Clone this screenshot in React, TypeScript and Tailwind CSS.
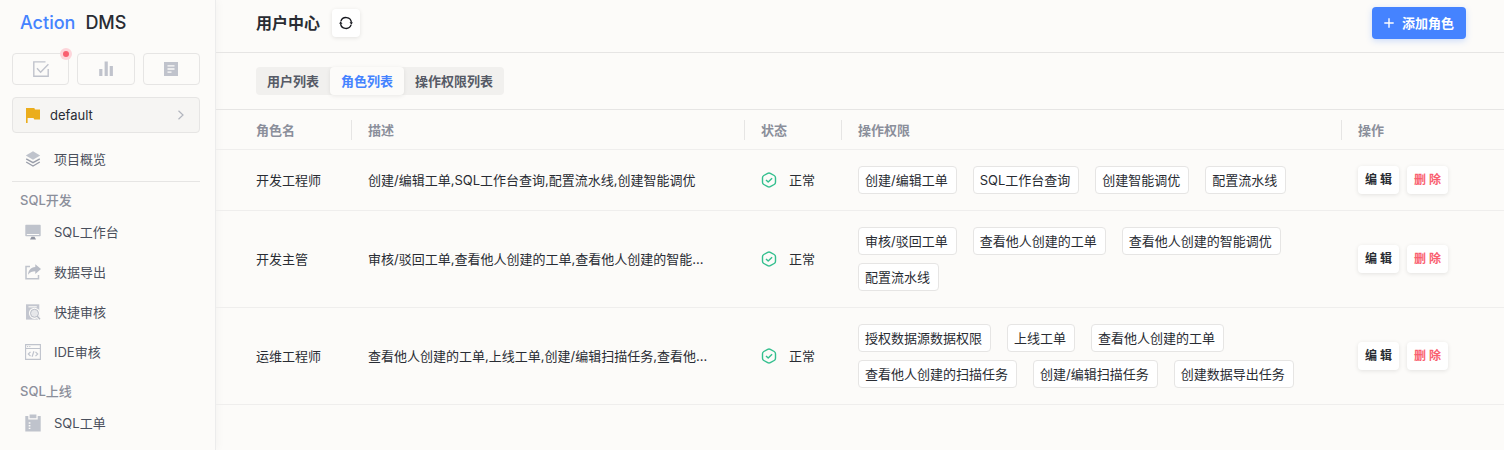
import React from "react";

const iconProps = { width: 16, height: 16, viewBox: "0 0 16 16", "aria-hidden": true } as const;

const LayersIcon = () => (
  <svg {...iconProps} className="text-[#bfc3cc]">
    <path d="M8 0.3 15.2 4.500 8 8.700.8 4.500Z" fill="currentColor" />
    <path d="M1.200 7.800 8 11.700 14.800 7.800" fill="none" stroke="#9a9eaa" strokeWidth="1.400" />
    <path d="M1.200 11 8 15 14.800 11" fill="none" stroke="#9a9eaa" strokeWidth="1.400" />
  </svg>
);

const MonitorIcon = () => (
  <svg {...iconProps} className="text-[#bfc3cc]">
    <path fillRule="evenodd" d="M1 .8h14a.7.7 0 0 1 .7.7v10a.7.7 0 0 1-.7.7H1a.7.7 0 0 1-.7-.7v-10A.7.7 0 0 1 1 .8Zm.8 9.300v.8h12.400v-.8Z" fill="currentColor" />
    <path d="M6.500 12.800h3l1.500 2.700H5Z" fill="#8f93a0" />
  </svg>
);

const ExportIcon = () => (
  <svg {...iconProps} className="text-[#bfc3cc]">
    <path d="M5 2.500H1v12.300h12.500V11" fill="none" stroke="currentColor" strokeWidth="1.500" />
    <path d="M10.300.2 16 5.100l-5.700 4.800V7.200C7 7.200 5 8 3.100 10.800 3.300 6.600 5.600 3.300 10.300 3Z" fill="#b8bcc6" />
  </svg>
);

const SearchDocIcon = () => (
  <svg {...iconProps}>
    <path d="M1 .3h13.300V15.600H1Z" fill="#c3c6cf" />
    <path d="M3.500 2.800h8.300" stroke="#fcfbf9" strokeWidth="1.100" />
    <circle cx="9.500" cy="9.300" r="4.300" fill="none" stroke="#fcfbf9" strokeWidth="2.600" />
    <path d="m12.300 12.300 3 3.400" stroke="#fcfbf9" strokeWidth="3" />
    <circle cx="9.500" cy="9.300" r="4" fill="#e6e7ea" stroke="#b8bcc6" strokeWidth="1" />
    <path d="m12.300 12.200 2.700 3.100" stroke="#b4b8c2" strokeWidth="1.300" />
  </svg>
);

const CodeWindowIcon = () => (
  <svg {...iconProps} fill="none" stroke="#bfc3cc">
    <path d="M.6.6h14.800v14.800H.6ZM.6 4.500h14.800" strokeWidth="1.100" />
    <path d="M2 2.600h1.200M4.200 2.600h1.200" strokeWidth="1" />
    <path d="M5.500 7.800 3.300 10l2.200 2.200M10.500 7.800l2.200 2.200-2.200 2.200M8.900 7.300l-1.800 5.400" strokeWidth="1.200" />
  </svg>
);

const ClipboardIcon = () => (
  <svg width="16" height="18" viewBox="0 0 16 18" aria-hidden="true">
    <path d="M.3 2h3v3.500h9.400V2h3v15.500H.3Z" fill="#bfc3cc" />
    <path d="M4.600.500h6.800v3.700H4.600Z" fill="#bfc3cc" />
    <path d="M3.700 9h1.700M3.700 11.700h1.700M3.700 14.400h1.700" stroke="#fcfbf9" strokeWidth="1.400" />
  </svg>
);

const CheckBoxIcon = () => (
  <svg {...iconProps} fill="none" stroke="#c0c3cc" strokeWidth="1.400">
    <path d="M12.500.9H.8v14.400h14.400V8" />
    <path d="m4 7.300 3.600 3.900 7.800-8" />
  </svg>
);

const ChartIcon = () => (
  <svg {...iconProps} fill="#c0c3cc">
    <path d="M1.200 8h3.200v7H1.200ZM6.600.500h3.200V15H6.600ZM11.700 5h3.200v10h-3.200Z" />
  </svg>
);

const NoteIcon = () => (
  <svg {...iconProps}>
    <path d="M1 1h14v14H1Z" fill="#c0c3cc" />
    <path d="M4.500 4.800h7M4.500 8h7M4.500 11.200h4" stroke="#fcfbf9" strokeWidth="1.300" />
  </svg>
);

const FlagIcon = () => (
  <svg {...iconProps}>
    <path d="M1 1h8.300l.7 1.500h5v10H9.300L8.500 11H2.600v5H1Z" fill="#ebad1c" />
  </svg>
);

const ChevronIcon = () => (
  <svg width="8" height="12" viewBox="0 0 8 12" fill="none" stroke="#b2b5be" strokeWidth="1.200" aria-hidden="true">
    <path d="m1.500 1.800 4.500 4.200-4.500 4.200" />
  </svg>
);

const RefreshIcon = () => (
  <svg width="14" height="14" viewBox="0 0 14 14" fill="none" stroke="#17191f" strokeWidth="1.300" aria-hidden="true">
    <path d="M1.900 5.200A5.400 5.400 0 0 1 12.400 6.600M12.100 8.800A5.400 5.400 0 0 1 1.600 7.400" />
    <path d="M10.500 6.300h3.300L12.500 8.700ZM.2 7.700h3.300L1.500 5.300Z" fill="#17191f" stroke="none" />
  </svg>
);

const PlusIcon = () => (
  <svg width="10" height="10" viewBox="0 0 10 10" stroke="#fff" strokeWidth="1.400" aria-hidden="true">
    <path d="M5 .3v9.400M.3 5h9.400" />
  </svg>
);

const StatusIcon = () => (
  <svg {...iconProps} fill="none" stroke="#33bf8e" strokeWidth="1.400" strokeLinejoin="round">
    <path d="M6.700 1.300a2.600 2.600 0 0 1 2.600 0l3.900 2.200a2.600 2.600 0 0 1 1.300 2.300v4.400a2.600 2.600 0 0 1-1.300 2.300l-3.900 2.200a2.600 2.600 0 0 1-2.600 0l-3.900-2.200a2.600 2.600 0 0 1-1.300-2.300V5.800a2.600 2.600 0 0 1 1.300-2.300Z" />
    <path d="m5 8 2.200 2.100 3.900-3.900" />
  </svg>
);

const sections = [
  {
    title: "SQL开发",
    items: [
      { label: "SQL工作台", icon: <MonitorIcon /> },
      { label: "数据导出", icon: <ExportIcon /> },
      { label: "快捷审核", icon: <SearchDocIcon /> },
      { label: "IDE审核", icon: <CodeWindowIcon /> },
    ],
  },
  { title: "SQL上线", items: [{ label: "SQL工单", icon: <ClipboardIcon /> }] },
];

const roles = [
  {
    name: "开发工程师",
    description: "创建/编辑工单,SQL工作台查询,配置流水线,创建智能调优",
    permissions: ["创建/编辑工单", "SQL工作台查询", "创建智能调优", "配置流水线"],
  },
  {
    name: "开发主管",
    description: "审核/驳回工单,查看他人创建的工单,查看他人创建的智能...",
    permissions: ["审核/驳回工单", "查看他人创建的工单", "查看他人创建的智能调优", "配置流水线"],
  },
  {
    name: "运维工程师",
    description: "查看他人创建的工单,上线工单,创建/编辑扫描任务,查看他...",
    permissions: ["授权数据源数据权限", "上线工单", "查看他人创建的工单", "查看他人创建的扫描任务", "创建/编辑扫描任务", "创建数据导出任务"],
  },
];

const tabs = ["用户列表", "角色列表", "操作权限列表"];

function NavItem({ label, icon }: { label: string; icon: React.ReactNode }) {
  return (
    <a href="#" className="flex h-10 items-center gap-[13px] pl-[13px] text-[#4a4f5c]">
      {icon}
      {label}
    </a>
  );
}

function Sidebar() {
  const shortcut = "flex h-8 flex-1 items-center justify-center rounded border border-[#e6e5e4]";
  return (
    <aside className="w-54 shrink-0 border-r border-[#ececec] pr-[15px] pl-3 shadow-[2px_0_8px_rgba(0,0,0,0.03)]">
      <div className="flex h-[53px] items-start gap-2.5 pt-[9px] pl-2 text-lg leading-7 font-medium">
        <span className="text-[#4583ff]">Action</span>
        <span className="text-[#292c33]">DMS</span>
      </div>
      <div className="flex gap-2">
        <button className={`${shortcut} relative`} aria-label="待办">
          <CheckBoxIcon />
          <span className="absolute -top-1.5 -right-1 size-3 rounded-full bg-[#fdd5da] p-[3px]">
            <span className="block size-1.5 rounded-full bg-[#f95f70]" />
          </span>
        </button>
        <button className={shortcut} aria-label="报表"><ChartIcon /></button>
        <button className={shortcut} aria-label="文档"><NoteIcon /></button>
      </div>
      <button className="mt-3 flex h-9 w-full items-center gap-[9px] rounded border border-[#e6e5e4] bg-[#f6f5f3] pr-3.5 pl-3 text-left text-[#292c33]">
        <FlagIcon />
        <span className="flex-1">default</span>
        <ChevronIcon />
      </button>
      <nav className="mt-1.5">
        <NavItem label="项目概览" icon={<LayersIcon />} />
        <hr className="mt-0.5 border-[#e6e5e4]" />
        <div className="flex flex-col gap-px">
          {sections.map((section) => (
            <section key={section.title}>
              <h2 className="pt-2 pb-0.5 pl-2 text-[13px] leading-5 font-medium text-[#8b8f9b]">{section.title}</h2>
              {section.items.map((item) => <NavItem key={item.label} {...item} />)}
            </section>
          ))}
        </div>
      </nav>
    </aside>
  );
}

function HeadCell({ children, first, last }: { children: React.ReactNode; first?: boolean; last?: boolean }) {
  return (
    <th scope="col" className={`p-0 text-left font-semibold ${first ? "pl-10" : "pl-4"}`}>
      <div className={`flex h-5 items-center ${last ? "" : "border-r border-[#e6e5e4]"}`}>{children}</div>
    </th>
  );
}

function RoleTable() {
  const action = "h-7 rounded bg-white px-[7px] text-xs font-semibold shadow-[0_1px_4px_rgba(0,0,0,0.1)]";
  return (
    <table className="w-full table-fixed border-separate border-spacing-0 [&_td]:border-b [&_td]:border-[#efeeed] [&_th]:border-b [&_th]:border-[#efeeed]">
      <colgroup>
        <col className="w-34" />
        <col className="w-[393px]" />
        <col className="w-[97px]" />
        <col />
        <col className="w-[162px]" />
      </colgroup>
      <thead>
        <tr className="h-10 text-[#8b8f9b]">
          <HeadCell first>角色名</HeadCell>
          <HeadCell>描述</HeadCell>
          <HeadCell>状态</HeadCell>
          <HeadCell>操作权限</HeadCell>
          <HeadCell last>操作</HeadCell>
        </tr>
      </thead>
      <tbody>
        {roles.map((role) => (
          <tr key={role.name}>
            <td className="pl-10">{role.name}</td>
            <td className="truncate pl-4">{role.description}</td>
            <td className="pl-4">
              <div className="flex items-center gap-3"><StatusIcon />正常</div>
            </td>
            <td className="p-4">
              <ul className="flex flex-wrap gap-x-4 gap-y-2">
                {role.permissions.map((permission) => (
                  <li key={permission} className="flex h-7 items-center rounded border border-[#e6e5e4] bg-white pr-2 pl-1.5">{permission}</li>
                ))}
              </ul>
            </td>
            <td className="pl-4">
              <div className="flex gap-2">
                <button className={action}>编 辑</button>
                <button className={`${action} text-[#f95f70]`}>删 除</button>
              </div>
            </td>
          </tr>
        ))}
      </tbody>
    </table>
  );
}

export default function App() {
  return (
    <div className="flex min-h-screen bg-[#fcfbf9] font-['Inter','Noto_Sans_CJK_SC',sans-serif] text-[13px] leading-5 text-[#292c33]">
      <Sidebar />
      <main className="min-w-0 flex-1">
        <header className="flex h-[53px] items-start justify-between border-b border-[#e6e5e4] pt-[7px] pr-[38px] pl-10">
          <div className="flex h-8 items-center gap-3">
            <h1 className="text-base leading-6 font-semibold">用户中心</h1>
            <button aria-label="刷新" className="flex size-7 items-center justify-center rounded bg-white shadow-[0_1px_4px_rgba(0,0,0,0.1)]">
              <RefreshIcon />
            </button>
          </div>
          <button className="flex h-8 items-center gap-2 rounded bg-[#4583ff] px-3 font-semibold text-white shadow-[0_2px_6px_rgba(69,131,255,0.25)]">
            <PlusIcon />
            添加角色
          </button>
        </header>
        <div className="flex h-[57px] items-center border-b border-[#e6e5e4] pl-10">
          <div role="tablist" className="flex h-7 rounded bg-[#f1f0ee]">
            {tabs.map((tab) => (
              <button
                key={tab}
                role="tab"
                aria-selected={tab === "角色列表"}
                className="rounded px-[11px] font-semibold text-[#565a66] aria-selected:bg-[#fcfbf9] aria-selected:text-[#4583ff] aria-selected:shadow-[0_1px_4px_rgba(0,0,0,0.08)]"
              >
                {tab}
              </button>
            ))}
          </div>
        </div>
        <RoleTable />
      </main>
    </div>
  );
}
